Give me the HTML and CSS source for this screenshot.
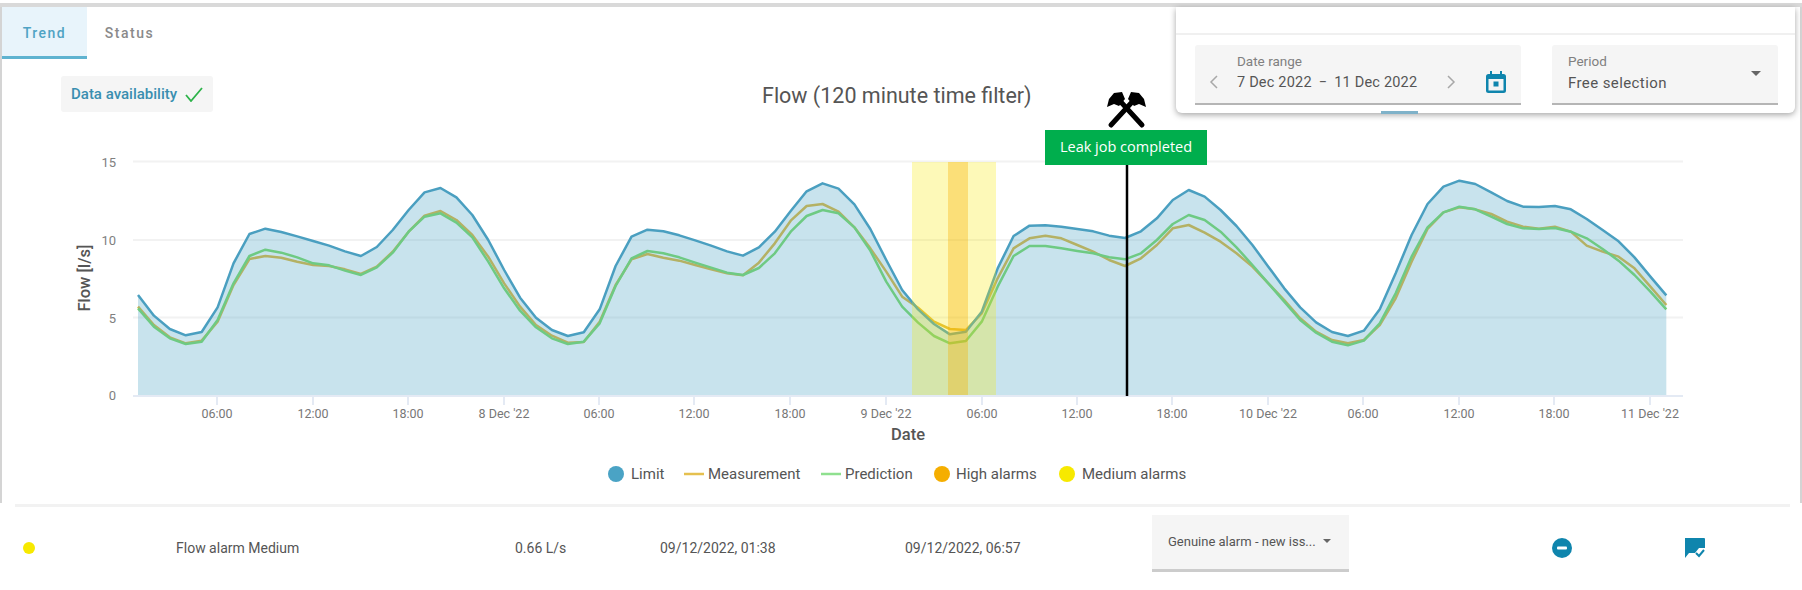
FILE: index.html
```html
<!DOCTYPE html>
<html lang="en">
<head>
    <meta charset="UTF-8">
    <meta name="viewport" content="width=device-width, initial-scale=1.0">
    <title>Flow trend</title>
    <link rel="stylesheet" href="styles.css">
</head>
<body>
    <div class="top-strip"></div>

    <!-- Trend card -->
    <div class="card">
        <div class="tabs">
            <div class="tab active">Trend</div>
            <div class="tab">Status</div>
        </div>

        <div class="toolbar">
            <div class="chip">
                <span>Data availability</span>
                <svg width="18" height="16" viewBox="0 0 18 16"><polyline points="1,9 6,15 17,2" class="chip-check"/></svg>
            </div>
            <h1 class="chart-title">Flow (120 minute time filter)</h1>
        </div>

        <svg class="chart" viewBox="0 112 1802 391" width="1802" height="391">
            <line x1="133" x2="1683" y1="161.5" y2="161.5" class="grid"/>
            <line x1="133" x2="1683" y1="240" y2="240" class="grid"/>
            <line x1="133" x2="1683" y1="317.5" y2="317.5" class="grid"/>
            <line x1="133" x2="1683" y1="396" y2="396" class="axis"/>

            <g class="ticks">
                <line x1="217" x2="217" y1="396" y2="405"/><line x1="313" x2="313" y1="396" y2="405"/>
                <line x1="408" x2="408" y1="396" y2="405"/><line x1="504" x2="504" y1="396" y2="405"/>
                <line x1="599" x2="599" y1="396" y2="405"/><line x1="694" x2="694" y1="396" y2="405"/>
                <line x1="790" x2="790" y1="396" y2="405"/><line x1="886" x2="886" y1="396" y2="405"/>
                <line x1="982" x2="982" y1="396" y2="405"/><line x1="1077" x2="1077" y1="396" y2="405"/>
                <line x1="1172" x2="1172" y1="396" y2="405"/><line x1="1268" x2="1268" y1="396" y2="405"/>
                <line x1="1363" x2="1363" y1="396" y2="405"/><line x1="1459" x2="1459" y1="396" y2="405"/>
                <line x1="1554" x2="1554" y1="396" y2="405"/><line x1="1650" x2="1650" y1="396" y2="405"/>
            </g>

            <!-- one unit in x = 1 hour, y in thirds of a pixel -->
            <g transform="translate(138 150) scale(15.92 0.33333)">
                <polyline class="line measurement" points="0,470 1,525 2,562 3,580 4,572 5,515 6,405 7,327 8,318 9,323 10,335 11,345 12,348 13,358 14,372 15,350 16,305 17,245 18,197 19,183 20,210 21,255 22,320 23,400 24,470 25,525 26,557 27,578 28,576 29,515 30,405 31,328 32,312 33,323 34,332 35,345 36,358 37,370 38,376 39,338 40,280 41,212 42,168 43,162 44,185 45,232 46,295 47,365 48,440 49,473 50,515 51,537 52,540 53,490 54,385 55,295 56,265 57,257 58,265 59,285 60,305 61,330 62,348 63,325 64,285 65,235 66,225 67,248 68,275 69,310 70,350 71,400 72,450 73,505 74,545 75,570 76,580 77,570 78,525 79,445 80,335 81,237 82,187 83,172 84,178 85,192 86,215 87,230 88,236 89,230 90,245 91,287 92,305 93,320 94,355 95,410 96,465"/>
                <polyline class="line prediction" points="0,475 1,530 2,565 3,582 4,575 5,510 6,400 7,318 8,299 9,308 10,322 11,340 12,346 13,362 14,375 15,352 16,308 17,245 18,200 19,190 20,218 21,262 22,335 23,415 24,482 25,532 26,565 27,582 28,575 29,520 30,408 31,325 32,303 33,310 34,322 35,338 36,353 37,368 38,375 39,354 40,310 41,245 42,198 43,180 44,190 45,232 46,302 47,395 48,470 49,518 50,558 51,580 52,573 53,515 54,410 55,318 56,288 57,288 58,295 59,303 60,310 61,322 62,328 63,310 64,270 65,222 66,195 67,210 68,245 69,292 70,345 71,400 72,455 73,510 74,548 75,575 76,586 77,572 78,520 79,430 80,320 81,232 82,187 83,170 84,178 85,200 86,222 87,235 88,237 89,234 90,245 91,265 92,297 93,332 94,375 95,425 96,478"/>
                <polygon class="area" points="0,735 0,435 1,497 2,537 3,556 4,546 5,472 6,340 7,252 8,236 9,246 10,259 11,273 12,287 13,304 14,318 15,291 16,240 17,180 18,127 19,114 20,142 21,195 22,270 23,360 24,443 25,503 26,540 27,558 28,547 29,478 30,348 31,260 32,239 33,244 34,256 35,271 36,287 37,304 38,317 39,292 40,245 41,183 42,124 43,100 44,116 45,163 46,237 47,330 48,420 49,478 50,522 51,553 52,545 53,485 54,355 55,258 56,227 57,226 58,230 59,237 60,244 61,257 62,264 63,244 64,205 65,150 66,120 67,140 68,180 69,228 70,285 71,350 72,415 73,472 74,517 75,546 76,558 77,542 78,478 79,370 80,255 81,162 82,110 83,92 84,102 85,127 86,153 87,170 88,171 89,168 90,178 91,207 92,240 93,274 94,322 95,380 96,436 96,735"/>
                <polyline class="line limit" points="0,435 1,497 2,537 3,556 4,546 5,472 6,340 7,252 8,236 9,246 10,259 11,273 12,287 13,304 14,318 15,291 16,240 17,180 18,127 19,114 20,142 21,195 22,270 23,360 24,443 25,503 26,540 27,558 28,547 29,478 30,348 31,260 32,239 33,244 34,256 35,271 36,287 37,304 38,317 39,292 40,245 41,183 42,124 43,100 44,116 45,163 46,237 47,330 48,420 49,478 50,522 51,553 52,545 53,485 54,355 55,258 56,227 57,226 58,230 59,237 60,244 61,257 62,264 63,244 64,205 65,150 66,120 67,140 68,180 69,228 70,285 71,350 72,415 73,472 74,517 75,546 76,558 77,542 78,478 79,370 80,255 81,162 82,110 83,92 84,102 85,127 86,153 87,170 88,171 89,168 90,178 91,207 92,240 93,274 94,322 95,380 96,436"/>
            </g>

            <rect x="912" y="162" width="84" height="233" class="band-medium"/>
            <rect x="948" y="162" width="20" height="233" class="band-high"/>

            <line x1="1127" x2="1127" y1="163" y2="396" class="job-line"/>
            <rect x="1045" y="130" width="162" height="35" class="job-box"/>
            <text x="1126" y="152" class="job-text">Leak job completed</text>

            <!-- crossed hammers -->
            <g transform="translate(1108 92)">
                <g id="hammer">
                    <line x1="3" y1="33" x2="25" y2="9" class="hammer-shaft"/>
                    <polygon points="20,7 23,0 31,1 36,7 38,15 31,12 26,14" class="hammer-head"/>
                </g>
                <use href="#hammer" transform="translate(37 0) scale(-1 1)"/>
            </g>

            <text x="116" y="167" class="y-label">15</text>
            <text x="116" y="245" class="y-label">10</text>
            <text x="116" y="323" class="y-label">5</text>
            <text x="116" y="399.500" class="y-label">0</text>
            <text class="axis-title" transform="translate(90 278) rotate(-90)">Flow [l/s]</text>

            <text x="217" y="418" class="x-label">06:00</text>
            <text x="313" y="418" class="x-label">12:00</text>
            <text x="408" y="418" class="x-label">18:00</text>
            <text x="504" y="418" class="x-label">8 Dec '22</text>
            <text x="599" y="418" class="x-label">06:00</text>
            <text x="694" y="418" class="x-label">12:00</text>
            <text x="790" y="418" class="x-label">18:00</text>
            <text x="886" y="418" class="x-label">9 Dec '22</text>
            <text x="982" y="418" class="x-label">06:00</text>
            <text x="1077" y="418" class="x-label">12:00</text>
            <text x="1172" y="418" class="x-label">18:00</text>
            <text x="1268" y="418" class="x-label">10 Dec '22</text>
            <text x="1363" y="418" class="x-label">06:00</text>
            <text x="1459" y="418" class="x-label">12:00</text>
            <text x="1554" y="418" class="x-label">18:00</text>
            <text x="1650" y="418" class="x-label">11 Dec '22</text>
            <text x="908" y="440" class="axis-title">Date</text>

            <!-- legend -->
            <circle cx="616" cy="474" r="8" class="dot-limit"/>
            <text x="631" y="479" class="legend-text">Limit</text>
            <line x1="684" x2="704" y1="474" y2="474" class="legend-measurement"/>
            <text x="708" y="479" class="legend-text">Measurement</text>
            <line x1="821" x2="841" y1="474" y2="474" class="legend-prediction"/>
            <text x="845" y="479" class="legend-text">Prediction</text>
            <circle cx="942" cy="474" r="8" class="dot-high"/>
            <text x="956" y="479" class="legend-text">High alarms</text>
            <circle cx="1067" cy="474" r="8" class="dot-medium"/>
            <text x="1082" y="479" class="legend-text">Medium alarms</text>
        </svg>
    </div>

    <div class="divider"></div>

    <!-- Alarm row -->
    <div class="alarm-row">
        <span class="alarm-dot"></span>
        <span class="col-name">Flow alarm Medium</span>
        <span class="col-value">0.66 L/s</span>
        <span class="col-start">09/12/2022, 01:38</span>
        <span class="col-end">09/12/2022, 06:57</span>
        <div class="alarm-select">
            <span>Genuine alarm - new iss...</span>
            <span class="caret small"></span>
        </div>
        <svg class="icon-minus" width="20" height="20" viewBox="0 0 20 20"><circle cx="10" cy="10" r="10" class="icon-fill"/><rect x="5" y="8.5" width="10" height="3" rx="1" class="icon-white"/></svg>
        <svg class="icon-comment" width="21" height="20" viewBox="0 0 21 20">
            <path d="M1 0H20a1 1 0 0 1 1 1V10H15L11 15H5L1 20Z" class="icon-fill"/>
            <polyline points="12,15 15,18 20,12" class="icon-check"/>
        </svg>
    </div>

    <!-- Date panel floating over the card -->
    <div class="date-panel">
        <div class="panel-head"></div>
        <div class="panel-body">
            <div class="field date-field">
                <svg class="chevron" width="10" height="14" viewBox="0 0 10 14"><polyline points="8,1 2,7 8,13"/></svg>
                <div class="field-text">
                    <div class="field-label">Date range</div>
                    <div class="field-value">7 Dec 2022<span class="range-dash">&minus;</span>11 Dec 2022</div>
                </div>
                <svg class="chevron" width="10" height="14" viewBox="0 0 10 14"><polyline points="2,1 8,7 2,13"/></svg>
                <svg class="calendar" width="20" height="22" viewBox="0 0 20 22">
                    <path d="M4 0h2v3h8V0h2v3h1.500A2.500 2.500 0 0 1 20 5.500v14a2.500 2.500 0 0 1-2.500 2.500h-15A2.500 2.500 0 0 1 0 19.500v-14A2.500 2.500 0 0 1 2.500 3H4ZM2.500 8v11.500h15V8Z" class="icon-fill"/>
                    <rect x="7.500" y="10.500" width="5" height="5" class="icon-fill"/>
                </svg>
            </div>
            <div class="field period-field">
                <div class="field-text">
                    <div class="field-label">Period</div>
                    <div class="field-value">Free selection</div>
                </div>
                <span class="caret"></span>
            </div>
        </div>
        <div class="panel-handle"></div>
    </div>
</body>
</html>
```

FILE: styles.css
```css
body {
    margin: 0;
    height: 590px;
    overflow: hidden;
    background: #fff;
    position: relative;
    font-family: Roboto, Arial, sans-serif;
    color: #555;
}
.top-strip {
    height: 7px;
    box-sizing: border-box;
    border-top: 3px solid #fff;
    background: #d9d9d9;
}

/* card */
.card {
    height: 496px;
    border-left: 2px solid #d4d4d4;
    border-right: 2px solid #d4d4d4;
}
.tabs {
    display: flex;
    height: 52px;
    box-sizing: border-box;
}
.tab {
    width: 85px;
    box-sizing: border-box;
    padding-top: 18px;
    text-align: center;
    font-size: 14px;
    font-weight: 500;
    letter-spacing: 1.500px;
    color: #8a8a8a;
}
.tab.active {
    background: #e8f4fb;
    border-bottom: 3px solid #5fb3d0;
    color: #4fa3c4;
}
.toolbar {
    display: flex;
    height: 36px;
    margin-top: 17px;
    padding-left: 59px;
}
.chip {
    display: flex;
    align-items: center;
    gap: 8px;
    width: 152px;
    box-sizing: border-box;
    padding-left: 10px;
    background: #f5f5f5;
    border-radius: 3px;
    font-size: 15px;
    font-weight: 500;
    color: #3a8fb0;
}
.chip-check {
    fill: none;
    stroke: #2db34a;
    stroke-width: 1.8;
}
.chart-title {
    margin: 7px 0 0 549px;
    font-size: 21.500px;
    font-weight: 400;
    line-height: 26px;
    color: #555;
    white-space: nowrap;
}
.chart {
    display: block;
    margin-left: -2px;
    overflow: visible;
}

/* chart parts */
.grid {
    stroke: #f2f2f2;
    stroke-width: 2;
}
.axis, .ticks line {
    stroke: #e4eaf4;
    stroke-width: 2;
}
.line {
    fill: none;
    stroke-width: 2.500;
    stroke-linejoin: round;
    vector-effect: non-scaling-stroke;
}
.measurement { stroke: #e2b83c; }
.prediction { stroke: #7fdc68; }
.limit { stroke: #4a9fc0; }
.area { fill: #4aa3c5; fill-opacity: 0.3; }
.band-medium { fill: #f7e900; fill-opacity: 0.28; }
.band-high { fill: #f5ae00; fill-opacity: 0.35; }
.job-line {
    stroke: #000;
    stroke-width: 2.500;
}
.job-box { fill: #00ae4d; }
.job-text {
    fill: #fff;
    font-family: "Open Sans", sans-serif;
    font-size: 14.500px;
    font-weight: 500;
    text-anchor: middle;
}
.hammer-shaft {
    stroke: #000;
    stroke-width: 5;
    stroke-linecap: round;
}
.hammer-head { fill: #000; }
.y-label {
    fill: #808080;
    font-size: 13px;
    text-anchor: end;
}
.x-label {
    fill: #777;
    font-size: 12.500px;
    text-anchor: middle;
}
.axis-title {
    fill: #555;
    font-size: 16.500px;
    font-weight: 500;
    text-anchor: middle;
}
.legend-text {
    fill: #555;
    font-size: 15px;
}
.legend-measurement { stroke: #e5c04f; stroke-width: 2.500; }
.legend-prediction { stroke: #8fe08f; stroke-width: 2.500; }
.dot-limit { fill: #4aa3c5; }
.dot-high { fill: #f5ae00; }
.dot-medium { fill: #f7e900; }

/* alarm row */
.divider {
    height: 3px;
    margin: 1px 12px 0 15px;
    background: #f2f2f2;
}
.alarm-row {
    display: flex;
    align-items: center;
    height: 68px;
    margin-top: 7px;
    font-size: 14px;
    color: #555;
}
.alarm-dot {
    width: 12px;
    height: 12px;
    margin-left: 23px;
    border-radius: 50%;
    background: #f7e900;
}
.col-name { margin-left: 141px; width: 339px; }
.col-value { width: 145px; }
.col-start { width: 245px; }
.col-end { width: 247px; }
.alarm-select {
    display: flex;
    align-items: center;
    gap: 7px;
    width: 197px;
    height: 57px;
    margin-bottom: 9px;
    box-sizing: border-box;
    padding: 0 0 2px 16px;
    background: #f5f5f5;
    border-bottom: 3px solid #ccc;
    font-size: 13px;
    white-space: nowrap;
}
.icon-minus { margin-left: 203px; }
.icon-comment { margin-left: 112px; }
.icon-fill { fill: #0f85ad; }
.icon-white { fill: #fff; }
.icon-check {
    fill: none;
    stroke: #0f85ad;
    stroke-width: 2;
}
.caret {
    width: 0;
    height: 0;
    border-left: 5px solid transparent;
    border-right: 5px solid transparent;
    border-top: 5px solid #666;
}
.caret.small {
    border-left-width: 4px;
    border-right-width: 4px;
    border-top-width: 4px;
}

/* date panel */
.date-panel {
    position: absolute;
    left: 1176px;
    top: 7px;
    width: 619px;
    height: 106px;
    background: #fff;
    border-radius: 0 0 6px 6px;
    box-shadow: 0 2px 6px rgba(0, 0, 0, 0.35);
}
.panel-head {
    height: 26px;
    border-bottom: 2px solid #f0f0f0;
}
.panel-body {
    display: flex;
    gap: 31px;
    padding: 10px 17px 0 19px;
}
.field {
    display: flex;
    align-items: center;
    height: 60px;
    box-sizing: border-box;
    background: #f5f5f5;
    border-bottom: 2px solid #b5b5b5;
    border-radius: 3px 3px 0 0;
}
.date-field {
    width: 326px;
    padding-left: 14px;
}
.period-field {
    width: 226px;
    padding-left: 16px;
}
.field-text {
    margin-top: -4px;
}
.date-field .field-text {
    width: 209px;
    margin-left: 18px;
}
.period-field .field-text {
    width: 183px;
}
.field-label {
    font-size: 13.500px;
    line-height: 16px;
    color: #808080;
}
.field-value {
    margin-top: 5px;
    font-size: 15px;
    letter-spacing: 0.400px;
    line-height: 18px;
    color: #555;
    white-space: nowrap;
}
.date-field .field-value {
    font-size: 14.500px;
    letter-spacing: 0.200px;
}
.range-dash {
    margin: 0 7px;
}
.chevron {
    fill: none;
    stroke: #a8a8a8;
    stroke-width: 1.500;
    flex: none;
    margin-top: 16px;
}
.calendar {
    margin: 15px 0 0 30px;
}
.period-field .caret {
    margin-top: -2px;
}
.panel-handle {
    position: absolute;
    left: 205px;
    top: 104px;
    width: 37px;
    height: 3px;
    background: #7fb2c9;
}
```
